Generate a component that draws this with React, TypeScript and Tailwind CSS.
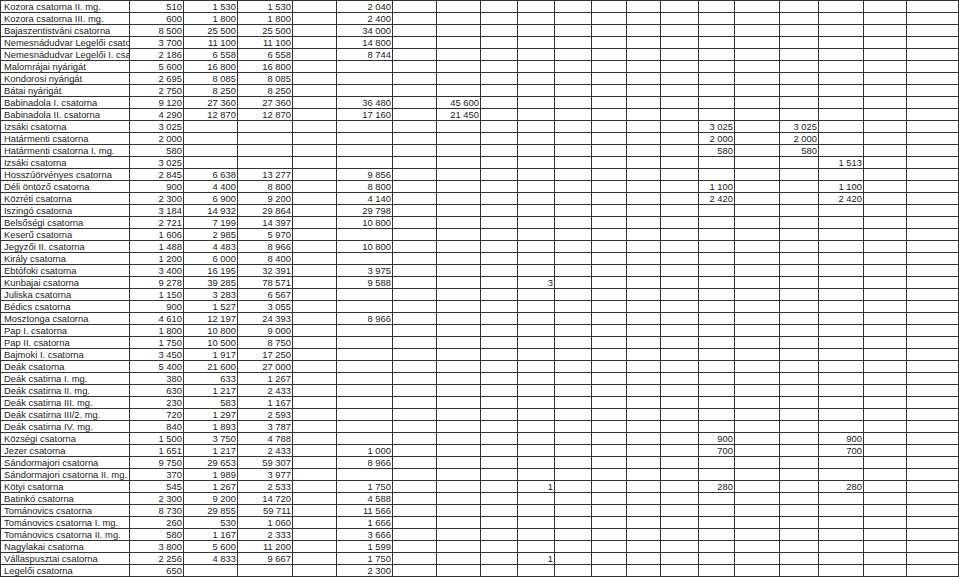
import React from 'react';

// column 0 = name, columns 1..19 = numeric cells (sparse)
type Row = { name: string; v: string[]; x?: Record<number, string> };

const rows: Row[] = [
  { name: 'Kozora csatorna II. mg.', v: ['510', '1 530', '1 530', '', '2 040'] },
  { name: 'Kozora csatorna III. mg.', v: ['600', '1 800', '1 800', '', '2 400'] },
  { name: 'Bajaszentistváni csatorna', v: ['8 500', '25 500', '25 500', '', '34 000'] },
  { name: 'Nemesnádudvar Legelői csatorna', v: ['3 700', '11 100', '11 100', '', '14 800'] },
  { name: 'Nemesnádudvar Legelői I. csatorna', v: ['2 186', '6 558', '6 558', '', '8 744'] },
  { name: 'Malomrájai nyárigát', v: ['5 600', '16 800', '16 800'] },
  { name: 'Kondorosi nyárigát', v: ['2 695', '8 085', '8 085'] },
  { name: 'Bátai nyárigát', v: ['2 750', '8 250', '8 250'] },
  { name: 'Babinadola I. csatorna', v: ['9 120', '27 360', '27 360', '', '36 480', '', '45 600'] },
  { name: 'Babinadola II. csatorna', v: ['4 290', '12 870', '12 870', '', '17 160', '', '21 450'] },
  { name: 'Izsáki csatorna', v: ['3 025'], x: { 13: '3 025', 15: '3 025' } },
  { name: 'Határmenti csatorna', v: ['2 000'], x: { 13: '2 000', 15: '2 000' } },
  { name: 'Határmenti csatorna I. mg.', v: ['580'], x: { 13: '580', 15: '580' } },
  { name: 'Izsáki csatorna', v: ['3 025'], x: { 16: '1 513' } },
  { name: 'Hosszúörvényes csatorna', v: ['2 845', '6 638', '13 277', '', '9 856'] },
  { name: 'Déli öntöző csatorna', v: ['900', '4 400', '8 800', '', '8 800'], x: { 13: '1 100', 16: '1 100' } },
  { name: 'Közréti csatorna', v: ['2 300', '6 900', '9 200', '', '4 140'], x: { 13: '2 420', 16: '2 420' } },
  { name: 'Iszingó csatorna', v: ['3 184', '14 932', '29 864', '', '29 798'] },
  { name: 'Belsőségi csatorna', v: ['2 721', '7 199', '14 397', '', '10 800'] },
  { name: 'Keserű csatorna', v: ['1 606', '2 985', '5 970'] },
  { name: 'Jegyzői II. csatorna', v: ['1 488', '4 483', '8 966', '', '10 800'] },
  { name: 'Király  csatorna', v: ['1 200', '6 000', '8 400'] },
  { name: 'Ebtófoki csatorna', v: ['3 400', '16 195', '32 391', '', '3 975'] },
  { name: 'Kunbajai csatorna', v: ['9 278', '39 285', '78 571', '', '9 588'], x: { 8: '3' } },
  { name: 'Juliska csatorna', v: ['1 150', '3 283', '6 567'] },
  { name: 'Bédics csatorna', v: ['900', '1 527', '3 055'] },
  { name: 'Mosztonga csatorna', v: ['4 610', '12 197', '24 393', '', '8 966'] },
  { name: 'Pap I. csatorna', v: ['1 800', '10 800', '9 000'] },
  { name: 'Pap II. csatorna', v: ['1 750', '10 500', '8 750'] },
  { name: 'Bajmoki I. csatorna', v: ['3 450', '1 917', '17 250'] },
  { name: 'Deák csatorna', v: ['5 400', '21 600', '27 000'] },
  { name: 'Deák csatirna I. mg.', v: ['380', '633', '1 267'] },
  { name: 'Deák csatirna II. mg.', v: ['630', '1 217', '2 433'] },
  { name: 'Deák csatirna III. mg.', v: ['230', '583', '1 167'] },
  { name: 'Deák csatirna III/2. mg.', v: ['720', '1 297', '2 593'] },
  { name: 'Deák csatirna IV. mg.', v: ['840', '1 893', '3 787'] },
  { name: 'Községi csatorna', v: ['1 500', '3 750', '4 788'], x: { 13: '900', 16: '900' } },
  { name: 'Jezer csatorna', v: ['1 651', '1 217', '2 433', '', '1 000'], x: { 13: '700', 16: '700' } },
  { name: 'Sándormajori csatorna', v: ['9 750', '29 653', '59 307', '', '8 966'] },
  { name: 'Sándormajori csatorna II. mg.', v: ['370', '1 989', '3 977'] },
  { name: 'Kötyi csatorna', v: ['545', '1 267', '2 533', '', '1 750'], x: { 8: '1', 13: '280', 16: '280' } },
  { name: 'Batinkó csatorna', v: ['2 300', '9 200', '14 720', '', '4 588'] },
  { name: 'Tománovics csatorna', v: ['8 730', '29 855', '59 711', '', '11 566'] },
  { name: 'Tománovics csatorna I. mg.', v: ['260', '530', '1 060', '', '1 666'] },
  { name: 'Tománovics csatorna II. mg.', v: ['580', '1 167', '2 333', '', '3 666'] },
  { name: 'Nagylakai csatorna', v: ['3 800', '5 600', '11 200', '', '1 599'] },
  { name: 'Vállaspusztai csatorna', v: ['2 256', '4 833', '9 667', '', '1 750'], x: { 8: '1' } },
  { name: 'Legelői csatorna', v: ['650', '', '', '', '2 300'] },
];

const NUM_COLS = 19;

function cellValue(row: Row, i: number) {
  if (i < 7 && row.v[i]) return row.v[i];
  return row.x?.[i] ?? '';
}

export default function App() {
  return (
    <div className="w-[959px] h-[578px] overflow-hidden bg-white font-['Liberation_Sans',Arial,sans-serif] text-[#1c1c1c]">
      <div className="grid grid-cols-[129px_54px_54px_55px_44px_56px_44px_44px_37px_37px_37px_35px_34px_38px_36px_45px_39px_45px_43px_1fr] border-l border-t border-[#333]">
        {rows.map((row, r) => (
          <React.Fragment key={r}>
            <div className="h-[12px] border-r border-b border-[#333] pl-[3px] text-[9.4px] leading-[11.5px] whitespace-nowrap overflow-hidden">
              {row.name}
            </div>
            {Array.from({ length: NUM_COLS }, (_, i) => (
              <div
                key={i}
                className="h-[12px] border-r border-b border-[#333] pr-[1px] text-right text-[9.4px] leading-[11.5px] whitespace-nowrap overflow-hidden"
              >
                {cellValue(row, i)}
              </div>
            ))}
          </React.Fragment>
        ))}
      </div>
    </div>
  );
}
